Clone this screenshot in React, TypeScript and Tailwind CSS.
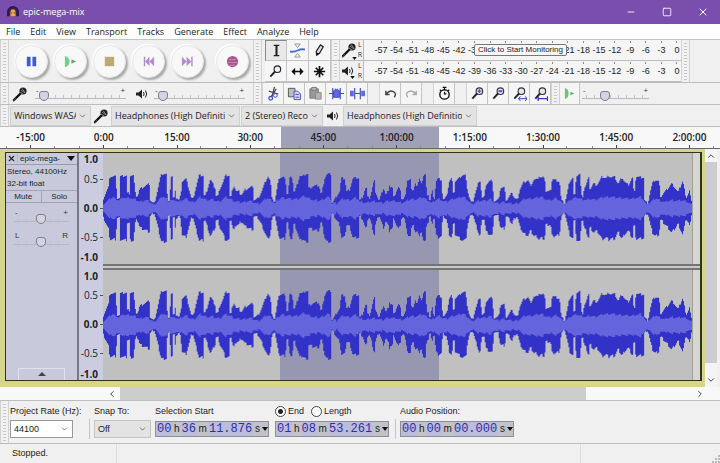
import type { ReactNode } from 'react';
import { ChevronDown, ChevronLeft, ChevronRight, ChevronUp, Minus, Square, X } from 'lucide-react';

const menus = ['File', 'Edit', 'View', 'Transport', 'Tracks', 'Generate', 'Effect', 'Analyze', 'Help'];

const levels = [-57, -54, -51, -48, -45, -42, -39, -36, -33, -30, -27, -24, -21, -18, -15, -12, -9, -6, -3, 0];

const times = ['-15:00', '0:00', '15:00', '30:00', '45:00', '1:00:00', '1:15:00', '1:30:00', '1:45:00', '2:00:00'];

// Peak envelope as [position, height] pairs, the clip is 1773 units long
const peaks: number[][] = [
  [0, 30], [16, 65], [19, 95], [41, 95], [43, 30], [49, 30], [51, 95], [73, 98], [75, 45], [79, 45], [81, 98], [95, 98],
  [97, 50], [103, 35], [109, 58], [125, 66], [141, 74], [143, 25], [153, 15], [161, 45], [171, 90], [175, 102], [193, 102],
  [195, 40], [199, 20], [203, 94], [211, 94], [213, 30], [216, 94], [221, 30], [223, 30], [225, 98], [228, 25], [233, 40],
  [236, 80], [243, 85], [251, 90], [261, 55], [269, 25], [279, 65], [288, 98], [303, 98], [305, 35], [311, 50], [323, 90],
  [331, 75], [339, 60], [343, 30], [351, 60], [361, 80], [367, 98], [381, 98], [383, 30], [389, 60], [395, 70], [403, 50],
  [411, 50], [416, 40], [426, 55], [436, 60], [454, 66], [456, 25], [466, 30], [476, 50], [486, 75], [496, 98], [506, 80],
  [509, 40], [516, 20], [523, 60], [528, 90], [551, 93], [554, 35], [561, 90], [571, 95], [576, 50], [586, 80], [591, 98],
  [601, 95], [608, 102], [619, 102], [621, 60], [631, 66], [653, 68], [656, 40], [666, 90], [673, 102], [687, 102],
  [689, 15], [701, 35], [711, 50], [716, 90], [731, 88], [733, 50], [741, 55], [751, 90], [771, 90], [774, 25], [781, 35],
  [788, 60], [795, 60], [799, 25], [806, 45], [814, 80], [818, 92], [822, 50], [831, 25], [841, 55], [847, 65], [851, 40],
  [858, 55], [863, 90], [865, 50], [871, 90], [875, 30], [881, 50], [891, 68], [897, 50], [901, 25], [909, 40], [916, 85],
  [928, 90], [931, 40], [939, 85], [946, 65], [951, 95], [958, 75], [964, 100], [973, 100], [976, 40], [981, 45], [984, 25],
  [991, 65], [996, 30], [1001, 80], [1007, 90], [1021, 85], [1024, 25], [1033, 35], [1041, 80], [1048, 90], [1052, 98],
  [1055, 40], [1059, 80], [1071, 90], [1079, 98], [1094, 98], [1097, 65], [1103, 35], [1111, 15], [1119, 45], [1126, 65],
  [1131, 85], [1139, 80], [1141, 30], [1147, 35], [1151, 70], [1161, 80], [1175, 85], [1177, 20], [1189, 25], [1195, 60],
  [1211, 62], [1215, 25], [1226, 40], [1231, 55], [1237, 35], [1246, 25], [1253, 55], [1263, 75], [1281, 85], [1287, 70],
  [1296, 85], [1306, 85], [1311, 98], [1321, 90], [1331, 100], [1334, 50], [1346, 50], [1351, 90], [1361, 85], [1376, 80],
  [1381, 25], [1389, 15], [1397, 50], [1403, 80], [1411, 90], [1417, 94], [1419, 40], [1424, 98], [1439, 105], [1441, 25],
  [1447, 60], [1453, 70], [1458, 85], [1464, 95], [1467, 60], [1476, 75], [1486, 70], [1496, 85], [1501, 95], [1516, 90],
  [1521, 100], [1531, 92], [1541, 95], [1551, 75], [1556, 85], [1563, 95], [1571, 80], [1581, 70], [1591, 90], [1597, 90],
  [1599, 55], [1603, 95], [1621, 92], [1629, 92], [1631, 25], [1639, 15], [1646, 50], [1653, 75], [1661, 85], [1676, 80],
  [1679, 35], [1686, 45], [1696, 55], [1711, 75], [1721, 65], [1731, 50], [1739, 70], [1745, 85], [1751, 65], [1755, 35],
  [1761, 45], [1766, 60], [1773, 20],
];

function heightAt(x: number) {
  const i = peaks.findIndex((p) => p[0] >= x);
  if (i <= 0) return peaks[i < 0 ? peaks.length - 1 : 0][1];
  const [x0, h0] = peaks[i - 1];
  const [x1, h1] = peaks[i];
  return h0 + ((h1 - h0) * (x - x0)) / (x1 - x0);
}

const columns = Array.from({ length: 591 }, (_, i) => {
  // lowest value inside the column, so that narrow gaps stay open
  const h = Math.min(heightAt(i * 3), heightAt(i * 3 + 3));
  const jitter = ((i * 7919) % 13) - 6;
  let sum = 0;
  for (let k = -4; k <= 4; k++) sum += heightAt(Math.min(1773, Math.max(0, (i + k) * 3)));
  return { x: i * 3, peak: h + jitter * 0.6, low: h * 0.98 + (((i * 104729) % 11) - 5) * 0.8, rms: Math.min(h * 0.8, (sum / 9) * 0.36 + jitter * 0.5) };
});

type Column = (typeof columns)[0];

const outline = (top: (c: Column) => number, bottom: (c: Column) => number) =>
  'M0 165' +
  columns.map((c) => `V${(165 - top(c)).toFixed(1)}H${c.x + 3}`).join('') +
  [...columns].reverse().map((c) => `V${(165 + bottom(c)).toFixed(1)}H${c.x}`).join('') +
  'Z';

const peakPath = outline((c) => c.peak, (c) => c.low);
const rmsPath = outline((c) => c.rms, (c) => c.rms);

function Grip() {
  return (
    <div className="w-[9px] shrink-0 self-stretch border-x border-[#d2d2d2] bg-[repeating-linear-gradient(#c6c6c6_0_1px,#f4f4f4_1px_3px)] bg-clip-content px-[2px] py-[2px]" />
  );
}

function Mic() {
  return (
    <svg viewBox="0 0 16 16" className="size-4 shrink-0">
      <path d="M2 14 9 7" stroke="#111" strokeWidth="2.4" strokeLinecap="round" />
      <circle cx="11" cy="5" r="3.6" fill="#222" />
      <path d="m9 4 4 3M10 2.500l3 4M8 6l3 2" stroke="#aaa" strokeWidth=".7" />
      <path d="M1 15c2 1 2-3 3-3" stroke="#555" fill="none" />
    </svg>
  );
}

function Speaker() {
  return (
    <svg viewBox="0 0 14 12" className="h-3 w-3.5 shrink-0" fill="none" stroke="#222">
      <path d="M1 4.500h2.500L7 1.500v9l-3.500-3H1z" fill="#222" stroke="none" />
      <path d="M8.500 4q1.200 2 0 4M10.500 2.500q2.300 3.500 0 7" />
    </svg>
  );
}

function Slider({ label, value, className, marks = ['-', '+'] }: { label: string; value: number; className: string; marks?: string[] }) {
  return (
    <div className={`relative ${className}`}>
      <div className="flex justify-between px-[1px] text-[8px] leading-[8px] text-[#333]">
        <span>{marks[0]}</span>
        <span>{marks[1]}</span>
      </div>
      <div className="absolute inset-x-1 top-[9px] h-[3px] bg-[repeating-linear-gradient(90deg,#c4c4c4_0_1px,transparent_1px_8px)]" />
      <input
        type="range"
        aria-label={label}
        defaultValue={value}
        className="relative -mt-1 block h-3 w-full appearance-none bg-[linear-gradient(#b8b8c0,#b8b8c0)] bg-[length:100%_1px] bg-[position:0_8px] bg-no-repeat [&::-webkit-slider-thumb]:size-[10px] [&::-webkit-slider-thumb]:appearance-none [&::-webkit-slider-thumb]:rounded-t-[3px] [&::-webkit-slider-thumb]:rounded-b-[5px] [&::-webkit-slider-thumb]:border [&::-webkit-slider-thumb]:border-[#7d7d8c] [&::-webkit-slider-thumb]:bg-[#d3d3e2]"
      />
    </div>
  );
}

function Dropdown({ label, value, className, id }: { label: string; value: string; className: string; id?: string }) {
  return (
    <div className={`relative flex shrink-0 items-center border ${className}`}>
      <select id={id} aria-label={id ? undefined : label} className="block w-full appearance-none overflow-hidden pr-[14px] pl-[3px] text-[9px] leading-[14px] text-clip whitespace-nowrap text-[#222]">
        <option>{value}</option>
      </select>
      <ChevronDown className="pointer-events-none absolute top-1/2 right-[3px] size-[9px] -translate-y-1/2 text-[#555]" />
    </div>
  );
}

const transport: { name: string; icon: ReactNode }[] = [
  { name: 'Pause', icon: <path d="M3 3h4v10H3zM9 3h4v10H9z" fill="#3f5bd0" /> },
  { name: 'Play', icon: <><path d="M2 2q5 1 5 6t-5 6z" fill="#78cf88" /><path d="m9 5.500 5 2.500-5 2.500z" fill="#62a870" /></> },
  { name: 'Stop', icon: <path d="M3 3h10v10H3z" fill="#b9aa78" /> },
  { name: 'Skip to Start', icon: <path d="M3 3h1.500v10H3zM9 3v10L4.500 8zM14 3v10L9 8z" fill="#b08cc8" /> },
  { name: 'Skip to End', icon: <path d="M12 3h1.500v10H12zM7 3v10l5-5zM2 3v10l5-5z" fill="#b08cc8" /> },
  { name: 'Record', icon: <><circle cx="8" cy="8" r="6" fill="#a8588c" /><path d="M4 6h8M3 9h10M5 12h6" stroke="#c08bb0" /></> },
];

const tools: { name: string; icon: ReactNode }[] = [
  { name: 'Selection Tool', icon: <path d="M5 2.500h2.500V13.500H5m6-11H8.500V13.500H11M8 3v10" stroke="#222" strokeWidth="1.200" fill="none" /> },
  { name: 'Envelope Tool', icon: <><path d="M5 1h6L8 5zM5 15h6l-3-4z" fill="#eee" stroke="#999" /><path d="M0 9q4 1 8-1t8-1" stroke="#4a70d6" strokeWidth="2" fill="none" /></> },
  { name: 'Draw Tool', icon: <><path d="m5 13-.5-4L9 2l3 2-4 7z" fill="#ddd" stroke="#222" strokeWidth="1.300" /><path d="m4.500 10 .5 3 3-2z" fill="#111" /></> },
  { name: 'Zoom Tool', icon: <><circle cx="10" cy="5.500" r="3.500" fill="#eef" stroke="#222" strokeWidth="1.200" /><path d="m7.500 8-5 5.500" stroke="#222" strokeWidth="2" /></> },
  { name: 'Time Shift Tool', icon: <><path d="M3 8h10" stroke="#111" strokeWidth="1.600" /><path d="M5.500 4v8l-4-4zM10.500 4v8l4-4z" fill="#111" /></> },
  { name: 'Multi-Tool', icon: <path d="M8 2v12M2 8h12M4 4l8 8M12 4l-8 8" stroke="#111" strokeWidth="1.800" /> },
];

const lens = (
  <>
    <circle cx="10" cy="5.500" r="3.500" fill="#e4e4f2" stroke="#333" strokeWidth="1.200" />
    <path d="m7.500 8-5 5.500" stroke="#222" strokeWidth="2" />
  </>
);

const editGroups: { name: string; icon: ReactNode }[][] = [
  [
    { name: 'Cut', icon: <><path d="M9 1 6.500 11M3 5.500l10 3M11 3 5 12" stroke="#445" strokeWidth="1.300" /><circle cx="5" cy="13" r="2" stroke="#3c49bd" strokeWidth="1.300" fill="none" /><circle cx="10" cy="10" r="2" stroke="#3c49bd" fill="none" /></> },
    { name: 'Copy', icon: <><path d="M1.500 2.500h7v9h-7z" fill="#bbb" stroke="#555" /><path d="M7.500 5.500h4l3 3v6h-7z" fill="#cfd3fa" stroke="#4a53bb" /><path d="M9 9h4M9 12h4" stroke="#4a53bb" /></> },
    { name: 'Paste', icon: <><path d="M2 3h9v10H2z" fill="#999" stroke="#777" /><path d="M4 1.500h5v3H4z" fill="#bbb" stroke="#777" /><path d="M8 7h6v7H8z" fill="#b4b4b4" stroke="#888" /></> },
    { name: 'Trim', icon: <><path d="M0 8h16M4 2v12M12 2v12" stroke="#3c49bd" strokeWidth="1.200" /><path d="M5 5h1l1-2 1 2 1-2 1 2h1v7H5z" fill="#6069d4" stroke="#3c49bd" /></> },
    { name: 'Silence', icon: <><path d="M5 8h6M5 2v12M11 2v12" stroke="#3c49bd" strokeWidth="1.200" /><path d="M0 5h4v6H0zM12 5h4v6h-4z" fill="#6069d4" /></> },
  ],
  [
    { name: 'Undo', icon: <path d="M3 5v4h4M3.500 8.500Q7 4 11 6t1 6" stroke="#444" strokeWidth="1.500" fill="none" /> },
    { name: 'Redo', icon: <path d="M13 5v4H9m3.500-.5Q9 4 5 6t-1 6" stroke="#aaa" strokeWidth="1.500" fill="none" /> },
  ],
  [{ name: 'Sync-Lock', icon: <><circle cx="8" cy="9" r="5" fill="#f6f6f6" stroke="#111" strokeWidth="1.500" /><path d="M8 9V6M8 4V1.500M6 1.500h4M3 4l1.500 1.500M13 4l-1.500 1.500M8 9l2-1" stroke="#111" strokeWidth="1.200" /></> }],
  [
    { name: 'Zoom In', icon: <>{lens}<path d="M8 5.500h4M10 3.500v4" stroke="#4850c8" strokeWidth="1.500" /></> },
    { name: 'Zoom Out', icon: <>{lens}<path d="M8 5.500h4" stroke="#4850c8" strokeWidth="2" /></> },
    { name: 'Fit Selection', icon: <>{lens}<path d="M7 13.500h9M9 11l-2 2.500L9 16m5-5 2 2.500-2 2.500" stroke="#3038b0" fill="none" /></> },
    { name: 'Fit Project', icon: <>{lens}<path d="M5 13.500h11M5.500 11v5M15.500 11v5" stroke="#3038b0" strokeWidth="1.400" /></> },
  ],
];

function Meter({ name, icon, covered, children }: { name: string; icon: ReactNode; covered?: [number, number]; children?: ReactNode }) {
  return (
    <div className="relative flex h-[21px] border-b border-[#bdbdbd]">
      <Grip />
      <button aria-label={name} className="flex w-6 items-center justify-between border-r border-[#bbb] pr-[1px] pl-[1px]">
        <span className="relative">
          {icon}
          <svg viewBox="0 0 6 4" className="absolute right-0 -bottom-[2px] h-[3px] w-[5px]"><path d="M0 0h6L3 4z" fill="#111" /></svg>
        </span>
        <span className="flex flex-col text-[7px] leading-[10px] text-[#333]">
          <span>L</span>
          <span>R</span>
        </span>
      </button>
      <div className="flex flex-1 justify-between bg-[#f5f5f5] pr-1 pl-[17px] font-['Liberation_Sans',sans-serif]">
        {levels.map((level) => (
          <span key={level} className="flex w-0 flex-col items-center text-[9px] leading-[15px] text-[#222]">
            <span className="mt-[1px] h-[2px] w-px shrink-0 bg-[#888]" />
            {covered && level > covered[0] && level < covered[1] ? null : level}
          </span>
        ))}
      </div>
      {children}
    </div>
  );
}

function Channel() {
  const mark = 'flex flex-1 items-center justify-end gap-[2px] after:h-px after:w-[3px] after:bg-[#555]';
  return (
    <div className="flex min-h-0 flex-1">
      <div className="flex w-[24px] shrink-0 flex-col bg-[#cccce0] text-right text-[10px] text-[#222]">
        <span className="h-3 pr-[5px] leading-3 font-bold">1.0</span>
        <span className={mark}>0.5</span>
        <span className={`${mark} font-bold`}>0.0</span>
        <span className={mark}>-0.5</span>
        <span className="h-3 pr-[5px] leading-3 font-bold">-1.0</span>
      </div>
      <div className="relative min-w-0 flex-1 border-r border-[#9aa58c] bg-[#c0c0c0]">
        <div className="absolute inset-y-0 left-[30%] w-[27%] bg-[#9797b1]" />
        <svg viewBox="0 0 1773 330" preserveAspectRatio="none" className="absolute inset-0 h-full w-full">
          <path d={peakPath} fill="#3232c8" />
          <path d={rmsPath} fill="#6464dc" />
        </svg>
      </div>
      <div className="w-[7px] shrink-0 bg-[#d6d6d8]" />
    </div>
  );
}

function TimeField({ label, parts }: { label: string; parts: [string, string, string] }) {
  const digits = 'bg-[#bcbcdc] font-["Liberation_Mono",monospace] text-[12px] leading-[14px] text-[#3030a0]';
  return (
    <div role="group" aria-label={label} className="flex h-4 w-[114px] items-center justify-between border border-[#8e8e98] bg-[#c2c2c8] pl-[1px] text-[10px] leading-[14px] text-[#222]">
      <input aria-label={`${label} hours`} defaultValue={parts[0]} className={`w-[15px] ${digits}`} />
      <span>h</span>
      <input aria-label={`${label} minutes`} defaultValue={parts[1]} className={`w-[15px] ${digits}`} />
      <span>m</span>
      <input aria-label={`${label} seconds`} defaultValue={parts[2]} className={`w-[44px] ${digits}`} />
      <span>s</span>
      <button aria-label={`${label} format`}>
        <svg viewBox="0 0 6 4" className="h-1 w-1.5"><path d="M0 0h6L3 4z" fill="#111" /></svg>
      </button>
    </div>
  );
}

export default function App() {
  return (
    <div className="flex h-screen flex-col overflow-hidden bg-[#f0f0f0] font-['Open_Sans',sans-serif] text-[#222]">
      <header className="flex h-6 shrink-0 items-center bg-[#7a4eac] pl-[7px] text-white">
        <svg viewBox="0 0 14 14" className="size-3">
          <path d="M1 12V7a6 6 0 0 1 12 0v5" fill="#3c2350" stroke="#251a55" strokeWidth="2" />
          <path d="M5 4h4l1 3v5H4V7z" fill="#f0a64b" />
          <path d="M5 7h1v2H5zM8 7h1v2H8z" fill="#8d4921" />
        </svg>
        <h1 className="ml-[4px] text-[9px] leading-3">epic-mega-mix</h1>
        <div className="ml-auto flex h-full">
          <button aria-label="Minimize" className="flex w-9 items-center justify-center"><Minus className="size-[10px]" /></button>
          <button aria-label="Maximize" className="flex w-9 items-center justify-center"><Square className="size-[10px]" /></button>
          <button aria-label="Close" className="flex w-[35px] items-center justify-center"><X className="size-3" /></button>
        </div>
      </header>

      <nav className="flex h-4 shrink-0 items-center gap-[10px] border-b border-[#c4c4c4] bg-white pl-[6px] text-[9px] leading-3">
        {menus.map((menu) => (
          <button key={menu}>{menu}</button>
        ))}
      </nav>

      <div className="flex h-[43px] shrink-0 border-b border-[#bdbdbd]">
        <Grip />
        <div className="flex w-[244px] shrink-0 items-center gap-[6px] pl-[6px]">
          {transport.map(({ name, icon }) => (
            <button key={name} aria-label={name} className="flex size-[33px] shrink-0 items-center justify-center rounded-full border border-[#e6e6e6] bg-[#f8f8f8] shadow-[2px_2px_2px_#aaa,-1px_-1px_1px_#fff] last:ml-[6px]">
              <svg viewBox="0 0 16 16" className="size-[15px]">{icon}</svg>
            </button>
          ))}
        </div>
        <Grip />
        <div className="grid w-[69px] shrink-0 grid-cols-3 grid-rows-2 pl-[3px]">
          {tools.map(({ name, icon }) => (
            <button key={name} aria-label={name} className="flex items-center justify-center border-r border-b border-[#c4c4c4] bg-[#f6f6f6] first:border-t first:border-l first:border-t-[#888] first:border-l-[#888] first:bg-[#e9e9e9]">
              <svg viewBox="0 0 16 16" className="size-[15px]">{icon}</svg>
            </button>
          ))}
        </div>
        <div className="w-[350px] shrink-0">
          <Meter name="Recording Meter" icon={<Mic />} covered={[-39, -21]}>
            <button className="absolute top-1/2 left-[143px] h-3 -translate-y-1/2 rounded-[2px] border border-[#777] bg-[#f7f7f7] px-[3px] font-['Liberation_Sans',sans-serif] text-[8px] leading-[10px] whitespace-nowrap">
              Click to Start Monitoring
            </button>
          </Meter>
          <Meter name="Playback Meter" icon={<Speaker />} />
        </div>
        <Grip />
      </div>

      <div className="flex h-[22px] shrink-0 items-center border-b border-[#bdbdbd]">
        <Grip />
        <div className="flex w-[244px] shrink-0 items-center pl-[3px]">
          <Mic />
          <Slider label="Recording volume" value={5} className="ml-[7px] w-[91px]" />
          <div className="mr-[5px] ml-[9px]"><Speaker /></div>
          <Slider label="Playback volume" value={5} className="w-[91px]" />
        </div>
        <Grip />
        <div className="flex h-full">
          {editGroups.map((group, i) => (
            <div key={i} className="mr-[11px] flex border-l border-[#d4d4d4] last:mr-0">
              {group.map(({ name, icon }) => (
                <button key={name} aria-label={name} className="flex w-[21px] items-center justify-center border-r border-[#c4c4c4] bg-[#f5f5f5]">
                  <svg viewBox="0 0 16 16" fill="none" className="size-[15px]">{icon}</svg>
                </button>
              ))}
            </div>
          ))}
        </div>
        <Grip />
        <button aria-label="Play at speed" className="flex h-full w-5 items-center justify-center border-r border-[#c4c4c4] bg-[#f5f5f5]">
          <svg viewBox="0 0 14 14" className="size-[13px]">
            <path d="M2 1q4 1 4 6t-4 6z" fill="#65c774" />
            <path d="m8 5 4 2-4 2z" fill="#4cae5d" />
          </svg>
        </button>
        <Slider label="Playback speed" value={31} className="ml-[2px] w-[67px]" />
      </div>

      <div className="flex h-[22px] shrink-0 items-center border-b border-[#bdbdbd]">
        <Grip />
        <Dropdown label="Audio host" value="Windows WASAPI" className="ml-[1px] h-5 w-[81px] border-[#d0d0d0] bg-[#e3e3e3]" />
        <div className="flex w-5 justify-center"><Mic /></div>
        <Dropdown label="Recording device" value="Headphones (High Definition)" className="h-5 w-[129px] border-[#d0d0d0] bg-[#e3e3e3]" />
        <Dropdown label="Recording channels" value="2 (Stereo) Recording" className="ml-[1px] h-5 w-[82px] border-[#d0d0d0] bg-[#e3e3e3]" />
        <div className="flex w-5 justify-center"><Speaker /></div>
        <Dropdown label="Playback device" value="Headphones (High Definition)" className="h-5 w-[134px] border-[#d0d0d0] bg-[#e3e3e3]" />
      </div>

      <div className="relative h-[22px] shrink-0 overflow-hidden border-b border-[#666] bg-[#f8f8f8]">
        <div className="absolute inset-y-0 left-[39%] w-[22%] bg-[#a0a0b8]" />
        <div className="relative -mx-[6px] flex h-full">
          {times.map((time) => (
            <div key={time} className="flex flex-1 flex-col items-center justify-between text-[10px] font-semibold">
              <span className="pt-[4px] leading-3">{time}</span>
              <div className="flex w-2/3 items-end justify-between">
                <span className="h-[2px] w-px bg-[#888]" />
                <span className="h-[3px] w-px bg-[#444]" />
                <span className="h-[2px] w-px bg-[#888]" />
              </div>
            </div>
          ))}
        </div>
      </div>

      <main className="flex min-h-0 flex-1">
        <div className="flex min-w-0 flex-1 border-t-[3px] border-r-[3px] border-b-[6px] border-l-[5px] border-[#d6d68a]">
          <div className="flex min-w-0 flex-1 border border-r-2 border-[#33331c]">
            <section aria-label="Track controls" className="flex w-[73px] shrink-0 flex-col border-r-2 border-[#777788] bg-[#c9c9dc] font-['Liberation_Sans',sans-serif] text-[8px]">
              <div className="flex h-3 shrink-0 items-center border-b border-[#9c9cac]">
                <button aria-label="Close track" className="border-r border-[#b4b4c4] px-[1px]"><X className="size-[9px]" strokeWidth={3} /></button>
                <button className="flex flex-1 items-center justify-between px-[2px] leading-[10px]">
                  epic-mega-
                  <svg viewBox="0 0 8 5" className="h-[5px] w-2"><path d="M0 0h8L4 5z" fill="#111" /></svg>
                </button>
              </div>
              <p className="pt-[1px] pl-[1px] leading-3 whitespace-nowrap">Stereo, 44100Hz<br />32-bit float</p>
              <div className="flex h-[13px] shrink-0 border-y border-[#a4a4b4] leading-[11px]">
                <button className="w-1/2 border-r border-[#a4a4b4]">Mute</button>
                <button className="w-1/2">Solo</button>
              </div>
              <Slider label="Gain" value={48} className="mx-2 mt-[6px]" />
              <Slider label="Pan" value={48} className="mx-2 mt-[7px]" marks={['L', 'R']} />
              <button aria-label="Collapse track" className="mx-auto mt-auto flex h-3 w-[47px] items-center justify-center border border-b-0 border-[#e0e0ee]">
                <svg viewBox="0 0 8 5" className="h-[5px] w-2"><path d="m4 0 4 4H0z" fill="#444" /></svg>
              </button>
            </section>
            <div className="flex min-w-0 flex-1 flex-col bg-[#cccce0]">
              <Channel />
              <div className="ml-[24px] h-[6px] shrink-0 border-y-2 border-[#747474] bg-[#c8c8c8]" />
              <Channel />
            </div>
          </div>
        </div>
        <div className="mr-[3px] flex w-3 shrink-0 flex-col items-center bg-[#cdcdcd]">
          <button aria-label="Scroll up" className="flex h-[13px] w-full items-center justify-center bg-[#f4f4f4]"><ChevronUp className="size-[10px]" /></button>
          <button aria-label="Scroll down" className="mt-auto flex h-6 w-full items-end justify-center bg-[#f4f4f4] pb-[2px]"><ChevronDown className="size-[10px]" /></button>
        </div>
      </main>

      <div className="flex h-[13px] shrink-0 items-center bg-[#f8f8f8] pr-[15px] pl-[107px]">
        <button aria-label="Scroll left"><ChevronLeft className="size-[10px]" /></button>
        <div className="ml-[3px] flex h-full flex-1">
          <div className="h-full w-[81%] bg-[#cdcdcd]" />
        </div>
        <button aria-label="Scroll right"><ChevronRight className="size-[10px]" /></button>
      </div>

      <div className="flex h-11 shrink-0 border-y border-[#bdbdbd] font-['Liberation_Sans',sans-serif] text-[9px] leading-3">
        <Grip />
        <div className="flex items-start pt-[4px] pl-[1px]">
          <div className="flex w-[79px] shrink-0 flex-col gap-[3px]">
            <label htmlFor="rate" className="whitespace-nowrap">Project Rate (Hz):</label>
            <Dropdown id="rate" label="Project Rate" value="44100" className="h-[18px] w-[63px] border-[#999] bg-white" />
          </div>
          <div className="mt-[14px] mr-[4px] h-5 w-px bg-[#c4c4c4]" />
          <div className="flex w-[61px] shrink-0 flex-col gap-[3px]">
            <label htmlFor="snap">Snap To:</label>
            <Dropdown id="snap" label="Snap To" value="Off" className="h-[18px] w-[57px] border-[#c4c4c4] bg-[#e3e3e3]" />
          </div>
          <div className="flex w-[120px] shrink-0 flex-col gap-[4px]">
            <span>Selection Start</span>
            <TimeField label="Selection Start" parts={['00', '36', '11.876']} />
          </div>
          <div className="flex w-[120px] shrink-0 flex-col gap-[4px]">
            <div className="flex gap-[7px]">
              {['End', 'Length'].map((mode) => (
                <label key={mode} className="flex items-center gap-[2px]">
                  <input type="radio" name="mode" defaultChecked={mode === 'End'} className="size-[11px] appearance-none rounded-full border border-[#444] bg-white checked:bg-[radial-gradient(#222_0_2px,white_3px)]" />
                  {mode}
                </label>
              ))}
            </div>
            <TimeField label="Selection End" parts={['01', '08', '53.261']} />
          </div>
          <div className="mt-[14px] mr-[4px] h-5 w-px bg-[#c4c4c4]" />
          <div className="flex flex-col gap-[4px]">
            <span>Audio Position:</span>
            <TimeField label="Audio Position" parts={['00', '00', '00.000']} />
          </div>
        </div>
      </div>

      <footer className="flex h-[19px] shrink-0 items-center pl-3 font-['Liberation_Sans',sans-serif] text-[9px]">
        <span className="w-[104px]">Stopped.</span>
        <div className="h-full flex-1 border-l border-[#dcdcdc]" />
        <div className="flex h-full w-[140px] items-end justify-end border-l border-[#dcdcdc]">
          <svg viewBox="0 0 8 8" className="size-2"><path d="M6 0h2v2H6zM3 3h2v2H3zM6 3h2v2H6zM0 6h2v2H0zM3 6h2v2H3zM6 6h2v2H6z" fill="#bbb" /></svg>
        </div>
      </footer>
    </div>
  );
}
